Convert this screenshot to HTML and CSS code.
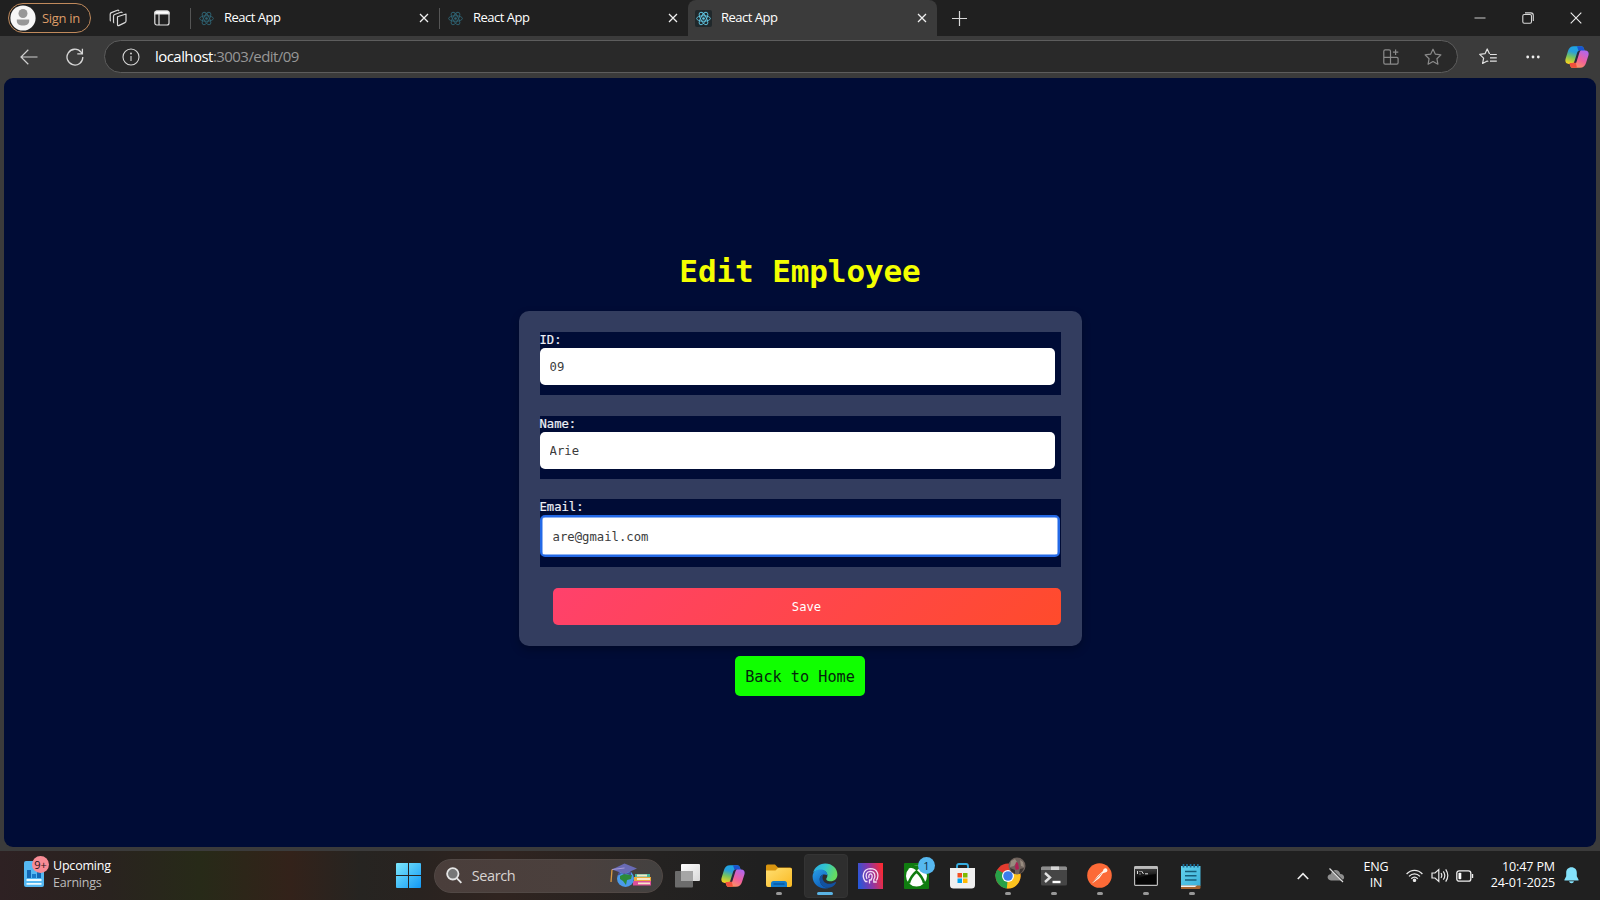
FILE: index.html
```html
<!DOCTYPE html>
<html lang="en">
<head>
<meta charset="utf-8">
<title>React App</title>
<link rel="stylesheet" href="styles.css">
</head>
<body>
<svg class="defs" width="0" height="0">
  <defs>
    <linearGradient id="cpL" x1="0.6" y1="0" x2="0.3" y2="1"><stop offset="0" stop-color="#1aa5e8"/><stop offset=".35" stop-color="#2a9fd8"/><stop offset=".65" stop-color="#79c45c"/><stop offset="1" stop-color="#f2d321"/></linearGradient>
    <linearGradient id="cpR" x1="0.8" y1="0" x2="0.2" y2="1"><stop offset="0" stop-color="#b066ee"/><stop offset=".5" stop-color="#f0609c"/><stop offset="1" stop-color="#ffa052"/></linearGradient>
    <linearGradient id="win" x1="0" y1="0" x2="1" y2="1"><stop offset="0" stop-color="#7ce8fd"/><stop offset="1" stop-color="#1298f5"/></linearGradient>
    <linearGradient id="fold" x1="0" y1="0" x2="1" y2="1"><stop offset="0" stop-color="#ffdf72"/><stop offset="1" stop-color="#fab922"/></linearGradient>
    <linearGradient id="edgeA" x1="0" y1="0" x2="1" y2="0.3"><stop offset="0" stop-color="#2aa9e6"/><stop offset=".5" stop-color="#30c4cf"/><stop offset="1" stop-color="#65dc62"/></linearGradient>
    <linearGradient id="edgeB" x1="0" y1="0" x2="0.6" y2="1"><stop offset="0" stop-color="#2a9ee6"/><stop offset="1" stop-color="#0b5cba"/></linearGradient>
    <linearGradient id="fp" x1="0" y1="0.6" x2="1" y2="0.4"><stop offset="0" stop-color="#2857d8"/><stop offset=".5" stop-color="#8b36a8"/><stop offset="1" stop-color="#f92a35"/></linearGradient>
    <linearGradient id="tvA" x1="0" y1="0" x2="1" y2="1"><stop offset="0" stop-color="#fff"/><stop offset="1" stop-color="#d8d8d8"/></linearGradient>
    <linearGradient id="note" x1="0" y1="0" x2="1" y2="1"><stop offset="0" stop-color="#64d3ee"/><stop offset="1" stop-color="#3bb0d9"/></linearGradient>
    <linearGradient id="cmd" x1="0" y1="0" x2="0" y2="1"><stop offset="0" stop-color="#3a3a3a"/><stop offset="1" stop-color="#000"/></linearGradient>
    <symbol id="react" viewBox="-12 -12 24 24">
      <g fill="none" stroke="currentColor" stroke-width="1.5"><ellipse rx="11" ry="4.400"/><ellipse rx="11" ry="4.400" transform="rotate(60)"/><ellipse rx="11" ry="4.400" transform="rotate(120)"/></g><circle r="2.1" fill="currentColor"/>
    </symbol>
    <symbol id="x" viewBox="0 0 10 10"><path d="M1 1l8 8M9 1L1 9" fill="none" stroke="currentColor" stroke-width="1.25"/></symbol>
    <symbol id="copilot" viewBox="0 0 24 24">
      <path d="M9 1.2h7.2c1.6 0 2.3 1 2.8 2.6l.8 2.7h-2.4c-1.600 0-2.500.8-3 2.400l-2.200 7.300c-.6 2-1.800 2.700-3.800 2.700H3.700C.8 18.900-.2 16.600.6 13.800L3 6C4 2.800 5.700 1.200 9 1.200z" fill="url(#cpL)"/>
      <path d="M12 1.200h4.200c1.600 0 2.300 1 2.800 2.600l.8 2.700h-2.400c-1.600 0-2.500.8-3 2.300z" fill="#1b54cf"/>
      <path d="M15 22.800H7.800c-1.600 0-2.300-1-2.800-2.600l-.5-2.300h2.800c1.600 0 2.500-.8 3-2.400l2.200-7.300c.6-2 1.800-2.700 3.800-2.700h4c2.900 0 3.900 2.300 3.100 5.100L21 18c-1 3.200-2.700 4.800-6 4.800z" fill="url(#cpR)"/>
      <path d="M12 22.800H7.800c-1.600 0-2.300-1-2.800-2.600l-.5-2.300h2.800c1.600 0 2.500-.8 3-2.400z" fill="#f0503c"/>
      <path d="M14.200 8.200l-3 9.600H9l3.200-10.200c.6-1.800 1.700-2.200 3.700-2.200-1 .6-1.400 1.500-1.700 2.800z" fill="#262a3d"/>
    </symbol>
  </defs>
</svg>

<header class="tabstrip">
  <div class="signin">
    <svg width="26" height="26" viewBox="0 0 26 26"><circle cx="13" cy="13" r="12.600" fill="#f6f6f6"/><circle cx="13" cy="8.500" r="4.500" fill="#979797"/><path d="M6.800 14.500h12.400v1.500c0 3-2.700 4.600-6.200 4.600s-6.200-1.600-6.200-4.600z" fill="#979797"/></svg>
    <span>Sign in</span>
  </div>
  <svg class="workspaces" width="18" height="18" viewBox="0 0 18 18" fill="none" stroke="#d8d8d8" stroke-width="1.200" stroke-linejoin="round"><path d="M8.500 7.800L17 5v7c0 .8-.4 1.300-1.100 1.600l-6.200 3c-.8.300-1.200-.1-1.200-.9zM5.200 13.800c-.5 0-.7-.4-.7-1V7.200c0-.9.400-1.400 1.200-1.700l6-2.300c.9-.3 1.400 0 1.500.8M1.900 11.900c-.5 0-.7-.4-.7-1V5.300c0-.9.400-1.400 1.200-1.700l6-2.300c.9-.3 1.400 0 1.500.8"/></svg>
  <svg class="vtabs" width="16" height="16" viewBox="0 0 16 16" fill="none" stroke="#e0e0e0" stroke-width="1.200"><rect x=".8" y="1" width="14.200" height="14" rx="2"/><path d="M1 4V2.600C1 1.600 1.800 1 2.800 1h10.400c1 0 1.800.6 1.800 1.600V4z" fill="#fff"/><path d="M5 4v11"/></svg>
  <div class="tab dim"><svg class="fav" width="15" height="15"><use href="#react"/></svg><span>React App</span><svg class="close" width="10" height="10"><use href="#x"/></svg></div>
  <div class="tab dim"><svg class="fav" width="15" height="15"><use href="#react"/></svg><span>React App</span><svg class="close" width="10" height="10"><use href="#x"/></svg></div>
  <div class="tab active"><i class="favbox"><svg class="fav" width="15" height="15"><use href="#react"/></svg></i><span>React App</span><svg class="close" width="10" height="10"><use href="#x"/></svg></div>
  <svg class="newtab" width="15" height="15" viewBox="0 0 15 15"><path d="M7.500 0v15M0 7.500h15" stroke="#d8d8d8" stroke-width="1.200"/></svg>
  <div class="winbtns">
    <svg width="12" height="12" viewBox="0 0 12 12"><path d="M.5 6h11" stroke="#ccc"/></svg>
    <svg width="12" height="12" viewBox="0 0 12 12" fill="none" stroke="#d8d8d8" stroke-width="1.100"><rect x=".8" y="2.500" width="8.700" height="8.700" rx="1.500"/><path d="M3 .9h5.800c1.500 0 2.500 1 2.500 2.500V9"/></svg>
    <svg width="12" height="12" viewBox="0 0 12 12"><path d="M.7.700l10.600 10.600M11.300.7L.7 11.300" stroke="#eee" stroke-width="1.100"/></svg>
  </div>
</header>

<nav class="toolbar">
  <svg class="back" width="18" height="16" viewBox="0 0 18 16" fill="none" stroke="#d0d0d0" stroke-width="1.200"><path d="M17.500 8H1M8.300.8L1 8l7.300 7.200"/></svg>
  <svg class="reload" width="18" height="18" viewBox="0 0 18 18" fill="none" stroke="#d8d8d8" stroke-width="1.300"><path d="M16.800 9A7.900 7.900 0 1 1 15 4.100L16.200 5.600M16.400.7v5.200h-5.100"/></svg>
  <div class="address">
    <svg width="18" height="18" viewBox="0 0 18 18" fill="none" stroke="#d8d8d8" stroke-width="1.100"><circle cx="9" cy="9" r="8"/><path d="M9 8v5"/><circle cx="9" cy="5.500" r=".4" fill="#ddd"/></svg>
    <span class="url"><b>localhost</b>:3003/edit/09</span>
    <svg class="apps" width="16" height="16" viewBox="0 0 16 16" fill="none" stroke="#8b8b8b" stroke-width="1.200"><path d="M7.500 15.100V2.200C7.500 1.300 7 .8 6.100.8H2.200C1.300.8.800 1.300.8 2.200v11.500c0 .9.500 1.400 1.400 1.400h11.500c.9 0 1.400-.5 1.400-1.400V9.800c0-.9-.5-1.400-1.400-1.400H.8M12.600.5v5.400M9.900 3.200h5.400"/></svg>
    <svg width="18" height="18" viewBox="0 0 18 18" fill="none" stroke="#8b8b8b" stroke-width="1.200" stroke-linejoin="round"><path d="M9 1.200l2.400 5 5.500.7-4 3.800 1 5.500L9 13.500l-4.900 2.700 1-5.500-4-3.800 5.500-.7z"/></svg>
  </div>
  <svg class="favs" width="18" height="17" viewBox="0 0 18 17" fill="none" stroke="#e2e2e2" stroke-width="1.200" stroke-linejoin="round"><path d="M10.600 6L8.200 1 6 5.700l-5.300.7 3.900 3.700-1 5.400L8.200 13l1.100.5M11 6.500h6.800M11 9.900h6.800M11 13.200h6.800"/></svg>
  <svg class="dots" width="14" height="4" viewBox="0 0 14 4" fill="#eee"><circle cx="1.700" cy="2" r="1.400"/><circle cx="7" cy="2" r="1.400"/><circle cx="12.300" cy="2" r="1.400"/></svg>
  <svg class="cop" width="24" height="24"><use href="#copilot"/></svg>
</nav>

<div class="frame">
  <main class="page">
    <h1>Edit Employee</h1>
    <form class="card">
      <div class="field"><label for="id">ID:</label><input id="id" value="09"></div>
      <div class="field"><label for="name">Name:</label><input id="name" value="Arie"></div>
      <div class="field email"><label for="email">Email:</label><input id="email" class="focused" value="are@gmail.com"></div>
      <button type="button" class="save">Save</button>
    </form>
    <a class="home">Back to Home</a>
  </main>
</div>

<footer class="taskbar">
  <div class="widget">
    <div class="widget-icon">
      <svg width="20" height="26" viewBox="0 0 20 26"><rect width="20" height="26" rx="2" fill="#55b8f2"/><path d="M3 9h4v8H3z" fill="#1266b4"/><path d="M8 13h4v4H8z" fill="#1879c9"/><path d="M13 11h4v6h-4z" fill="#1266b4"/><path d="M2.500 19h15M2.500 22.800h15" stroke="#eafaff" stroke-width="1.800"/></svg>
      <span class="badge">9+</span>
    </div>
    <div class="widget-text"><span>Upcoming</span><span>Earnings</span></div>
  </div>
  <div class="apps-row">
    <div class="app start"><svg width="25" height="25" viewBox="0 0 25 25" fill="url(#win)"><path d="M1 0h11v12H0V1q0-1 1-1zM13 0h11q1 0 1 1v11H13zM0 13h12v12H1q-1 0-1-1zM13 13h12v11q0 1-1 1H13z"/></svg></div>
    <div class="search">
      <svg width="16" height="17" viewBox="0 0 16 17" fill="none" stroke="#e6e6e6" stroke-width="1.800"><circle cx="6.800" cy="6.800" r="5.700" fill="#777"/><path d="M11 11.300l4.400 4.600"/></svg>
      <span>Search</span>
      <svg class="scholar" width="42" height="25" viewBox="0 0 42 25"><path d="M25 11h15v3H25z" fill="#49b79b"/><path d="M24 14h17v4H24z" fill="#e9a93c"/><path d="M23 18h18v4.500H23z" fill="#dd4f9a"/><path d="M27 12.500h10M27 16h13M28 20.300h12" stroke="#f6e8c8" stroke-width="1.800"/><circle cx="15.500" cy="15.500" r="8.500" fill="#4a9bea"/><path d="M10 13l4-2 8 1-1 4-4 1-1 5-3-4-3-2z" fill="#2c8a3a"/><path d="M2 6.500L14.500.5 27 5.500 14.500 11z" fill="#696bb5"/><path d="M8 9.500v3q6-4 13 0v-4l-6.500 3z" fill="#4b4d94"/><path d="M2 6.500L14.500 5" stroke="#a79ad8" fill="none"/><path d="M2 6.500L1 19" stroke="#d99a45" stroke-width="1.300"/></svg>
    </div>
    <div class="app"><svg width="25" height="24" viewBox="0 0 25 24"><rect x="6" y="0" width="19" height="17" rx="1" fill="url(#tvA)"/><rect x="0" y="7" width="18" height="16.500" rx="1" fill="#6c6c6c"/><path d="M6 7h12v10H6z" fill="#a6a6a6"/></svg></div>
    <div class="app"><svg width="24" height="24"><use href="#copilot"/></svg></div>
    <div class="app run"><svg width="26" height="24" viewBox="0 0 26 24"><path d="M0 2Q0 .500 1.500.5H9l3 3H24q2 0 2 2V10H0z" fill="#d9950f"/><path d="M0 6.500h9.500L12 4h12.500Q26 4 26 5.500V21q0 2-2 2H2q-2 0-2-2z" fill="url(#fold)"/><path d="M5 23v-3.500q0-2.500 2.500-2.500h11q2.500 0 2.500 2.500V23z" fill="#127ccc"/><path d="M7.500 20h11" stroke="#0a55a0" stroke-width="1.400"/></svg></div>
    <div class="app run current"><svg width="26" height="26" viewBox="0 0 26 26"><path d="M1 10C2.600 4.500 7.200.6 13.200.6c7 0 12.200 5 12.200 10.800 0 4-3 6.800-6.800 6.800-3.400 0-4.400-1.500-4.400-2.300 0-.8 1.200-1.400 1.200-3.500 0-2.800-2.700-5.300-6.300-5.300C5 7.100 1.900 9 1 10z" fill="url(#edgeA)"/><path d="M.6 13.500C.600 9.200 4.200 6.600 8.600 6.600c4 0 6.800 2.600 6.800 5.600-5-2.400-7.700 1-7.700 4 0 5.600 5 9.200 10.500 8.400-1.500.6-3.300.8-5 .8C6 25.400.6 20.200.6 13.500z" fill="url(#edgeB)"/><path d="M7.700 16.500c0-2.600 1.400-4.600 4-5.300-1 1.300-1.500 3-1 5 1 3.600 5 5 8 4.600 1.800-.2 3.300-1 4.500-1.700.6-.3 1 .2.700.8-1.300 2.400-3.300 4-5.900 4.700C12 25.500 7.700 21.500 7.700 16.500z" fill="#12519f"/></svg></div>
    <div class="app"><svg width="25" height="26" viewBox="0 0 25 26"><rect width="25" height="26" fill="url(#fp)"/><g fill="none" stroke="#f3dff5" stroke-width="1.300"><path d="M9.500 18.500H7.500C3.500 13.500 5 6 12.300 5.700c7 0 9.500 6.300 6 11.800"/><path d="M9 16C6.800 11.500 8.800 8.400 12.300 8.300c4.500 0 5.800 4.600 3.500 8.200v2.500h3M11 15c-1.300-5.500 4.300-5.300 3 -.5l-1 2.500h-1.500v3.500"/></g></svg></div>
    <div class="app xbox"><svg width="25" height="26" viewBox="0 0 25 26"><rect width="25" height="26" rx="1" fill="#107c10"/><circle cx="12.500" cy="13" r="10.500" fill="#fff"/><path d="M5 4.800c3-.3 5.500 1.200 7.500 2.700 2-1.500 4.500-3 7.500-2.700C17 1.800 8 1.800 5 4.800z" fill="#107c10"/><path d="M4.800 20.500C6 15.500 9 11.500 12.500 8.500c3.500 3 6.500 7 7.700 12" fill="none" stroke="#107c10" stroke-width="2.600"/></svg><span class="badge blue">1</span></div>
    <div class="app"><svg width="25" height="26" viewBox="0 0 25 26"><path d="M7 6V3q0-2 2-2h7q2 0 2 2v3" fill="none" stroke="#35aee2" stroke-width="1.800"/><path d="M0 5h25v17q0 3.500-3.500 3.500h-18Q0 25.500 0 22z" fill="#f0f0f0"/><path d="M7.500 10H12v4.500H7.500z" fill="#f25022"/><path d="M13 10h4.500v4.500H13z" fill="#7fba00"/><path d="M7.500 15.500H12V20H7.500z" fill="#00a4ef"/><path d="M13 15.500h4.500V20H13z" fill="#ffb900"/></svg></div>
    <div class="app run chrome"><svg width="26" height="26" viewBox="0 0 26 26"><circle cx="13" cy="13" r="12.500" fill="#e33b2e"/><path d="M13 13L2.200 6.700A12.500 12.500 0 0 0 12 25.450l5-6.200z" fill="#27a148"/><path d="M13 13l10.900-6.200A12.500 12.500 0 0 1 11.800 25.450z" fill="#fcc31e"/><path d="M13 13L2.200 6.700 0 13l9 7z" fill="#27a148"/><circle cx="13" cy="13" r="6" fill="#fff"/><circle cx="13" cy="13" r="4.800" fill="#3b7ded"/></svg><svg class="avatar" width="18" height="18" viewBox="0 0 18 18"><circle cx="9" cy="9" r="8.500" fill="#6f625c"/><path d="M3 4l4-2 2 3-3 4-4 1zM12 3l3 2 1 5-3-1z" fill="#988c80"/><path d="M8 5l2 1 1 6-3 1-1-3z" fill="#b02055"/><path d="M2 11l5 2v4l-4-3zM12 12l4-1-2 4-3 2z" fill="#3b3432"/></svg></div>
    <div class="app run"><svg width="26" height="20" viewBox="0 0 26 20"><rect width="26" height="19" y=".5" rx="1.500" fill="#454545"/><path d="M0 4V2Q0 .5 1.500.5h23Q26 .500 26 2v2z" fill="#8d8d8d"/><path d="M10 .5h8V4h-8z" fill="#d5d5d5"/><path d="M4 7l5 4.500-5 4.500" fill="none" stroke="#e0e0e0" stroke-width="2.400"/><path d="M11.500 16h8" stroke="#fff" stroke-width="2.400"/></svg></div>
    <div class="app run"><svg width="25" height="25" viewBox="0 0 25 25"><circle cx="12.500" cy="12.500" r="12.300" fill="#fc6a37"/><path d="M5 20.500l5.500-7.500 5.500-5c.3-2.300 2-3.300 3.700-2.300 1.300 1 .8 3-.8 3.600l-3 1-3.600 5z" fill="#fff4ea"/><path d="M6 19l8.500-8.500" stroke="#d98a6a" stroke-width=".7"/></svg></div>
    <div class="app run"><svg width="24" height="20" viewBox="0 0 24 20"><rect x=".6" y=".6" width="22.800" height="18.800" rx=".8" fill="#050505" stroke="#bcbcbc" stroke-width="1.200"/><path d="M1.500 3h21v5Q9 9 1.500 14z" fill="url(#cmd)"/><path d="M1 2h22" stroke="#ddd" stroke-width="1.600"/><path d="M3.500 5v3M6 5v1M6 7.500v1M7.500 5l2 3M11 7.800h3" stroke="#ddd"/></svg></div>
    <div class="app run"><svg width="20" height="26" viewBox="0 0 20 26"><path d="M0 3h19.500v20H0z" fill="url(#note)"/><path d="M0 22.500h19.500v2q0 1.500-1.500 1.500h-18z" fill="#a5632e"/><path d="M0 22.500h16l-2 1.500H0z" fill="#f2f2f2"/><path d="M2.500 1v3.500M6 1v3.500M9.600 1v3.500M13.200 1v3.500M16.800 1v3.500" stroke="#1d6f99" stroke-width="1.700"/><path d="M4 8.500h11.500M4 12.800h11.500M4 17h11.500" stroke="#175d7a" stroke-width="1.400"/></svg></div>
  </div>
  <div class="tray">
    <svg class="chev" width="12" height="8" viewBox="0 0 12 8"><path d="M.8 7L6 1.600 11.200 7" fill="none" stroke="#eee" stroke-width="1.600"/></svg>
    <svg class="cloud" width="18" height="15" viewBox="0 0 18 15"><path d="M4 12.500C-.6 12-.4 6.600 3.800 6.300 5 .8 12 .5 13.300 6c5 0 5 6.300.7 6.500z" fill="#8f8f8f"/><path d="M3.300.5L17 14" stroke="#202020" stroke-width="1.600"/><path d="M2.500.5L16 14" stroke="#ddd" stroke-width="1.200"/></svg>
    <div class="lang"><span>ENG</span><span>IN</span></div>
    <svg class="wifi" width="17" height="13" viewBox="0 0 17 13" fill="none" stroke="#e8e8e8" stroke-width="1.300"><path d="M.6 5C5 .1 12 .1 16.400 5M3 7.400C6.300 3.900 10.700 3.900 14 7.400M5.300 9.700c2-2 4.400-2 6.400 0"/><circle cx="8.500" cy="11.300" r="1.100" fill="#eee"/></svg>
    <svg class="vol" width="18" height="15" viewBox="0 0 18 15" fill="none" stroke="#e8e8e8" stroke-width="1.200"><path d="M1 5h3l3.800-3.500v12L4 10H1zM10 5.200q1.600 2.300 0 4.600M12.300 3.300q3 4.200 0 8.400M14.700 1.300q4.200 6.200 0 12.400"/></svg>
    <svg class="bat" width="18" height="12" viewBox="0 0 18 12"><rect x=".8" y=".8" width="14" height="10.400" rx="2.300" fill="none" stroke="#eee" stroke-width="1.300"/><rect x="2.500" y="2.700" width="2.800" height="6.600" rx=".8" fill="#fff"/><path d="M16.500 4v4" stroke="#eee" stroke-width="1.400"/></svg>
    <div class="clock"><span>10:47 PM</span><span>24-01-2025</span></div>
    <svg class="bell" width="15" height="17" viewBox="0 0 15 17" fill="#84e2fb"><path d="M7.500.3c3.200 0 5.300 2.400 5.300 5.400v3.500l1.800 3.500q.2.900-.7.900H1.100q-.900 0-.7-.9l1.800-3.500V5.700C2.200 2.700 4.300.3 7.500.3zM5 14.300h5q-.5 2-2.500 2T5 14.300z"/></svg>
  </div>
</footer>
</body>
</html>
```
FILE: styles.css
```css
* { box-sizing: border-box; }
body {
  margin: 0;
  width: 1600px;
  height: 900px;
  overflow: hidden;
  display: flex;
  flex-direction: column;
  background: #3b3b3b;
  color: #fff;
  font-family: "Open Sans", "Noto Sans", sans-serif;
}
svg { display: block; flex: none; }
.defs { position: absolute; }

/* Tab strip */
.tabstrip {
  height: 36px;
  flex: none;
  display: flex;
  align-items: center;
  background: #202020;
  padding-left: 8px;
}
.signin {
  width: 83px;
  height: 30px;
  border: 1.500px solid #c08a5c;
  border-radius: 15px;
  display: flex;
  align-items: center;
  gap: 6px;
  padding-left: 1px;
  color: #dc9c68;
  font-size: 13px;
  letter-spacing: -0.3px;
  white-space: nowrap;
}
.workspaces { margin-left: 18px; }
.vtabs { margin-left: 27px; margin-right: 20px; }
.tab {
  width: 249px;
  height: 36px;
  flex: none;
  display: flex;
  align-items: center;
  padding: 0 10px 0 9px;
  font-size: 13px;
  letter-spacing: -0.5px;
}
.tab span { padding-bottom: 2px; }
.tab.dim { background: linear-gradient(#555, #555) 0 8px / 1px 21px no-repeat; }
.tab.dim .fav { color: #2f6474; margin-right: 10px; }
.tab .close { margin-left: auto; color: #f0f0f0; }
.tab.active {
  background: #3b3b3b;
  border-radius: 8px 8px 0 0;
  padding-left: 7px;
}
.favbox {
  width: 17px;
  height: 17px;
  padding: 1px;
  background: #20282b;
  border-radius: 2px;
  margin-right: 9px;
}
.tab.active .fav { color: #61c8e4; }
.newtab { margin-left: 15px; }
.winbtns { display: flex; gap: 36px; margin-left: auto; margin-right: 18px; }

/* Toolbar */
.toolbar {
  height: 42px;
  flex: none;
  display: flex;
  align-items: center;
  padding: 0 11px 1px 20px;
}
.reload { margin-left: 28px; }
.address {
  width: 1354px;
  height: 33px;
  margin-left: 20px;
  border: 1px solid #5d5d5d;
  border-radius: 17px;
  background: #292929;
  display: flex;
  align-items: center;
  padding: 0 15px 0 17px;
}
.url {
  margin-left: 15px;
  padding-bottom: 2px;
  font-size: 15px;
  letter-spacing: -0.550px;
  color: #979797;
}
.url b { font-weight: 400; color: #fff; }
.apps { margin-left: auto; margin-right: 25px; }
.favs { margin-left: 21px; }
.dots { margin-left: 29px; }
.cop { margin-left: auto; }

/* Page */
.frame { height: 773px; flex: none; padding: 0 4px 4px; }
.page {
  height: 769px;
  background: #000c36;
  border-radius: 9px;
  display: flex;
  flex-direction: column;
  align-items: center;
  font-family: "DejaVu Sans Mono", monospace;
}
h1 {
  margin: 172px 0 19px;
  font-size: 31px;
  line-height: 42px;
  color: #f4ff00;
  letter-spacing: -0.1px;
}
.card {
  width: 563px;
  height: 335px;
  padding: 21px;
  border-radius: 10px;
  background: #333d5f;
  box-shadow: 0 4px 8px rgba(0, 0, 0, 0.25);
}
.field {
  height: 63px;
  margin-bottom: 21px;
  background: #000c36;
}
.field.email { height: 68px; margin-top: -1px; }
label {
  display: block;
  height: 16px;
  font-size: 12.200px;
  line-height: 17px;
  color: #eef0f6;
  -webkit-text-stroke: 0.2px #eef0f6;
}
input {
  display: block;
  width: 515px;
  height: 37px;
  border: 0;
  border-radius: 5px;
  padding: 1px 10px 0;
  background: #fff;
  color: #3c3c3c;
  font: 12.250px "DejaVu Sans Mono", monospace;
}
input.focused {
  width: 520px;
  height: 42px;
  padding-left: 11px;
  border: 2px solid #2369e6;
  box-shadow: inset 0 0 0 0.500px #2369e6;
}
.save {
  display: block;
  width: 508px;
  height: 37px;
  margin-left: 13px;
  border: 0;
  border-radius: 5px;
  background: linear-gradient(135deg, #ff416c, #ff4b2b);
  color: #fff;
  font: 12.200px "DejaVu Sans Mono", monospace;
}
.home {
  width: 130px;
  height: 40px;
  margin-top: 10px;
  border-radius: 5px;
  background: #10ff00;
  color: #04240d;
  font-size: 15.200px;
  line-height: 42px;
  text-align: center;
  white-space: nowrap;
}

/* Taskbar */
.taskbar {
  height: 49px;
  flex: none;
  display: flex;
  align-items: center;
  background: linear-gradient(90deg, #2e2123 0, #29231f 110px, #272a18 200px, #33221a 290px, #262421 360px, #292320 420px, #302420 500px, #242221 660px, #202020 760px);
}
.widget { width: 386px; height: 49px; display: flex; padding-left: 24px; }
.widget-icon { position: relative; padding-top: 10px; }
.badge {
  position: absolute;
  left: 8px;
  top: 5px;
  width: 17px;
  height: 17px;
  border-radius: 50%;
  background: #f88c96;
  color: #281518;
  font-size: 11px;
  line-height: 17px;
  text-align: center;
}
.widget-text {
  display: flex;
  flex-direction: column;
  margin: 7px 0 0 9px;
  font-size: 12.500px;
  line-height: 16.500px;
  letter-spacing: -0.2px;
}
.widget-text span + span { color: #bcbcbc; }
.apps-row { display: flex; height: 49px; align-items: center; }
.app {
  position: relative;
  width: 45.800px;
  height: 49px;
  flex: none;
  display: flex;
  align-items: center;
  justify-content: center;
}
.app > svg { position: relative; }
.app.run::after {
  content: "";
  position: absolute;
  left: 20px;
  bottom: 5px;
  width: 6px;
  height: 3px;
  border-radius: 2px;
  background: #989898;
}
.app.current::before {
  content: "";
  position: absolute;
  left: 2px;
  top: 3px;
  width: 42px;
  height: 42px;
  border-radius: 4px;
  background: #2e2e2e;
  border: 1px solid #343434;
}
.app.run.current::after { left: 15px; width: 16px; background: #5ab4e6; }
.badge.blue { left: 24px; top: 6px; background: #56b8f0; color: #0b2b40; }
.app .avatar { position: absolute; left: 23px; top: 6px; }
.search {
  width: 229px;
  height: 34px;
  margin: 0 2px;
  border-radius: 17px;
  border: 1px solid #514845;
  background: linear-gradient(90deg, #4a3e3b, #4b403d 60%, #434140);
  display: flex;
  align-items: center;
  padding: 0 10px 0 11px;
  color: #d8d4d2;
  font-size: 14.500px;
  letter-spacing: -0.4px;
}
.search span { margin-left: 10px; }
.scholar { margin-left: auto; }
.tray { display: flex; align-items: center; margin-left: auto; padding-right: 21px; }
.cloud { margin-left: 18px; }
.lang, .clock {
  display: flex;
  flex-direction: column;
  padding-bottom: 1px;
  font-size: 12.500px;
  line-height: 16.500px;
  letter-spacing: -0.2px;
}
.lang { width: 30px; align-items: center; margin-left: 16px; }
.wifi { margin-left: 15px; }
.vol { margin-left: 8px; }
.bat { margin-left: 7px; }
.clock { width: 70px; align-items: flex-end; margin-left: 11px; white-space: nowrap; letter-spacing: -0.1px; }
.bell { margin-left: 9px; }
```
